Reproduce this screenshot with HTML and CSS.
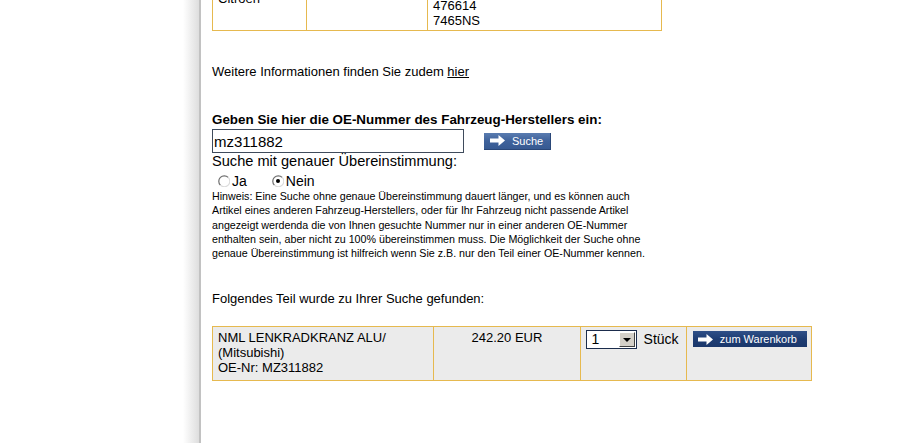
FILE: index.html
```html
<!DOCTYPE html>
<html lang="de">
<head>
<meta charset="utf-8">
<title>OE-Nummer Suche</title>
<link rel="stylesheet" href="styles.css">
</head>
<body>
<div class="page">
  <table class="spec">
    <tr>
      <td class="c1">Citroen</td>
      <td class="c2"></td>
      <td class="c3">476614<br>7465NS</td>
    </tr>
  </table>

  <p class="more">Weitere Informationen finden Sie zudem <a href="#">hier</a></p>

  <form class="search">
    <label class="title" for="oe">Geben Sie hier die OE-Nummer des Fahrzeug-Herstellers ein:</label>
    <div class="row">
      <input id="oe" class="field" type="text" value="mz311882">
      <button type="button" class="btn btn-search"><svg class="arrow" viewBox="0 0 15 11" width="15" height="11"><polygon points="0,3.5 8.5,3.5 8.5,0 15,5.5 8.5,11 8.5,7.5 0,7.5" fill="#fff"/></svg><span>Suche</span></button>
    </div>
    <div class="exact">Suche mit genauer Übereinstimmung:</div>
    <div class="radios">
      <span class="radio"><svg viewBox="0 0 12 12" width="12" height="12"><path d="M10.2 2.4A5 5 0 1 0 2.4 10.2" fill="none" stroke="#6e6e6e" stroke-width="1.2"/><path d="M10.2 2.4A5 5 0 0 1 2.4 10.2" fill="none" stroke="#dcdcdc" stroke-width="1.2"/></svg>Ja</span>
      <span class="radio"><svg viewBox="0 0 12 12" width="12" height="12"><path d="M10.2 2.4A5 5 0 1 0 2.4 10.2" fill="none" stroke="#6e6e6e" stroke-width="1.2"/><path d="M10.2 2.4A5 5 0 0 1 2.4 10.2" fill="none" stroke="#dcdcdc" stroke-width="1.2"/><circle cx="6" cy="6" r="2" fill="#000"/></svg>Nein</span>
    </div>
    <p class="hint">Hinweis: Eine Suche ohne genaue Übereinstimmung dauert länger, und es können auch<br>Artikel eines anderen Fahrzeug-Herstellers, oder für Ihr Fahrzeug nicht passende Artikel<br>angezeigt werdenda die von Ihnen gesuchte Nummer nur in einer anderen OE-Nummer<br>enthalten sein, aber nicht zu 100% übereinstimmen muss. Die Möglichkeit der Suche ohne<br>genaue Übereinstimmung ist hilfreich wenn Sie z.B. nur den Teil einer OE-Nummer kennen.</p>
  </form>

  <p class="found">Folgendes Teil wurde zu Ihrer Suche gefunden:</p>

  <table class="result">
    <tr>
      <td class="r1">NML LENKRADKRANZ ALU/<br>(Mitsubishi)<br>OE-Nr: MZ311882</td>
      <td class="r2">242.20 EUR</td>
      <td class="r3"><div class="qty"><div class="select"><span class="val">1</span><span class="drop"><i></i></span></div><span class="unit">Stück</span></div></td>
      <td class="r4"><button type="button" class="btn btn-cart"><svg class="arrow" viewBox="0 0 15 11" width="15" height="11"><polygon points="0,3.5 8.5,3.5 8.5,0 15,5.5 8.5,11 8.5,7.5 0,7.5" fill="#fff"/></svg><span>zum Warenkorb</span></button></td>
    </tr>
  </table>
</div>
</body>
</html>
```

FILE: styles.css
```css
html, body {
  height: 100%;
}

body {
  margin: 0;
  overflow: hidden;
  font-family: "Liberation Sans", Arial, sans-serif;
  font-size: 13px;
  color: #000;
  background: linear-gradient(to right, #fff 183px, #dedede 199px, #c2c2c2 199px, #c2c2c2 201px, #fff 201px);
}

.page {
  margin-left: 201px;
  padding-left: 11px;
  margin-top: -35px;
}

/* top spec table */
.spec {
  border-collapse: collapse;
  table-layout: fixed;
  width: 450px;
}

.spec td {
  border: 1px solid #e6b94f;
  padding: 2px 5px;
  line-height: 15px;
  vertical-align: top;
}

.spec .c1 { width: 83px; vertical-align: middle; }
.spec .c2 { width: 110px; }
.spec .c3 { width: 223px; padding-top: 32px; }

.more {
  margin: 33px 0 0;
  line-height: 15px;
}

.more a {
  color: #000;
  text-decoration: underline;
}

.search {
  margin: 0;
}

.title {
  display: block;
  margin-top: 33px;
  font-weight: bold;
  font-size: 13.4px;
  line-height: 15px;
}

.row {
  display: flex;
  align-items: center;
  margin-top: 2px;
}

.field {
  box-sizing: border-box;
  width: 252px;
  height: 24px;
  margin: 0;
  padding: 0 2px 0 1px;
  border: 1px solid #3f4b5c;
  font-family: "Liberation Sans", Arial, sans-serif;
  font-size: 15px;
  color: #000;
  background: #fff;
  outline: none;
}

.btn {
  display: flex;
  align-items: center;
  box-sizing: border-box;
  margin: 0;
  padding: 0 0 0 6px;
  border: 0;
  font-family: "Liberation Sans", Arial, sans-serif;
  font-size: 11px;
  color: #fff;
  cursor: pointer;
}

.btn .arrow {
  flex: none;
  display: block;
}

.btn-search {
  margin-left: 20px;
  width: 67px;
  height: 17px;
  gap: 7px;
  background: linear-gradient(to bottom, #5a7cb0 0%, #3f629b 50%, #375a92 100%);
  border-right: 1px solid #2a4778;
  border-bottom: 1px solid #2a4778;
}

.btn-cart {
  width: 114px;
  height: 16px;
  gap: 7px;
  padding-left: 5px;
  background: linear-gradient(to bottom, #2f5088 0%, #1e3d73 50%, #1a376b 100%);
}

.exact {
  font-size: 14.6px;
  line-height: 17px;
}

.radios {
  display: flex;
  align-items: center;
  height: 17px;
  margin-top: 2px;
  padding-left: 6px;
  font-size: 14px;
}

.radio {
  display: flex;
  align-items: center;
  gap: 2px;
  margin-right: 25px;
}

.radio svg {
  display: block;
}

.hint {
  margin: 0;
  font-size: 10.7px;
  line-height: 14.25px;
  white-space: nowrap;
}

.found {
  margin: 31px 0 0;
  line-height: 15px;
}

/* result table */
.result {
  border-collapse: collapse;
  table-layout: fixed;
  width: 600px;
  margin-top: 20px;
  background: #ebebeb;
}

.result td {
  border: 1px solid #e6b94f;
  padding: 3px 5px 5px;
  line-height: 15px;
  vertical-align: top;
}

.result .r1 { width: 210px; }
.result .r2 { width: 135px; text-align: center; }
.result .r3 { width: 95px; padding-left: 5px; }
.result .r4 { width: 113px; padding-left: 6px; padding-top: 4px; }

.qty {
  display: flex;
  align-items: center;
}

.select {
  box-sizing: border-box;
  display: flex;
  align-items: center;
  justify-content: space-between;
  width: 51px;
  height: 19px;
  border: 1px solid #1b2c4c;
  background: #fff;
  padding: 1px;
}

.select .val {
  padding-left: 4px;
  font-size: 14px;
}

.select .drop {
  box-sizing: border-box;
  display: flex;
  align-items: center;
  justify-content: center;
  width: 16px;
  height: 15px;
  background: #d4d0c8;
  border-top: 1px solid #fff;
  border-left: 1px solid #fff;
  border-right: 1px solid #404040;
  border-bottom: 1px solid #404040;
}

.select .drop i {
  width: 0;
  height: 0;
  border-left: 4px solid transparent;
  border-right: 4px solid transparent;
  border-top: 4px solid #000;
}

.unit {
  margin-left: 7px;
  font-size: 14px;
}
```
